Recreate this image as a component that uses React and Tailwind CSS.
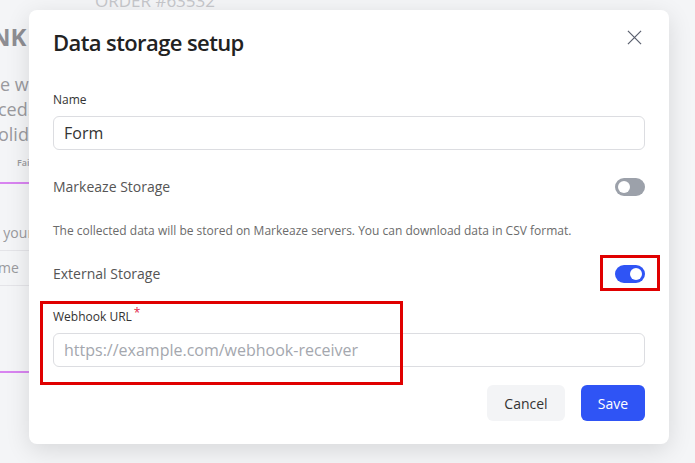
import { useState } from "react";

const font = { fontFamily: '"Open Sans", "Noto Sans", sans-serif' };

const Toggle = ({ on, onChange }) => (
  <button
    onClick={onChange}
    className={`relative flex h-[18px] w-[30px] items-center rounded-full px-[3px] ${
      on ? "justify-end bg-[#2f54f5]" : "justify-start bg-[#9ca1aa]"
    }`}
  >
    <span className="block h-[12px] w-[12px] rounded-full bg-white" />
  </button>
);

const Backdrop = () => (
  <div className="flex h-full w-[29px] flex-col overflow-hidden text-[#9a9a9e]" style={font}>
    <div className="h-[24px]" />
    <div className="-ml-[9px] whitespace-nowrap text-[24px] font-bold leading-[26px] text-[#8e8e93]">NK</div>
    <div className="mt-[22px] whitespace-nowrap text-[18px] leading-[25px]">e wil</div>
    <div className="-ml-[2px] whitespace-nowrap text-[18px] leading-[25px]">ced.</div>
    <div className="-ml-[2px] whitespace-nowrap text-[18px] leading-[25px]">olida</div>
    <div className="mt-[9px] whitespace-nowrap pl-[17px] text-[9px] font-semibold">Fai</div>
    <div className="mt-[12px] h-[2px] w-full bg-[#d884f0]" />
    <div className="-ml-[6px] mt-[39px] whitespace-nowrap text-[14px] leading-[20px]">r your</div>
    <div className="mt-[7px] h-px w-full bg-[#e4e4e8]" />
    <div className="-ml-[2px] mt-[7px] whitespace-nowrap text-[14px] leading-[20px]">me</div>
    <div className="mt-[7px] h-px w-full bg-[#e4e4e8]" />
    <div className="mt-[85px] h-[2px] w-full bg-[#d884f0]" />
  </div>
);

export default function App() {
  const [name, setName] = useState("Form");
  const [markeaze, setMarkeaze] = useState(false);
  const [external, setExternal] = useState(true);
  const [url, setUrl] = useState("");

  return (
    <div className="relative h-[463px] w-[695px] overflow-hidden bg-[#f4f5f7]" style={font}>
      <Backdrop />
      <div className="absolute left-[95px] top-[-12px] whitespace-nowrap text-[17px] text-[#c6c7cb]">
        ORDER #63532
      </div>

      <div className="absolute left-[29px] top-[10px] flex h-[434px] w-[640px] flex-col rounded-[8px] bg-white px-[24px] shadow-[0_6px_24px_rgba(0,0,0,0.12)]">
        <div className="flex items-start justify-between pt-[18px]">
          <h2 className="text-[22px] font-semibold leading-[28px] tracking-[-0.6px] text-[#222]">Data storage setup</h2>
          <button className="mr-[3px] mt-[2px] text-[#5a5f6e]">
            <svg width="15" height="15" viewBox="0 0 16 16" fill="none" stroke="currentColor" strokeWidth="1.3">
              <path d="M1 1l14 14M15 1L1 15" />
            </svg>
          </button>
        </div>

        <label className="mt-[36px] text-[12px] leading-[16px] text-[#333]">Name</label>
        <input
          value={name}
          onChange={(e) => setName(e.target.value)}
          className="mt-[8px] h-[34px] w-full rounded-[6px] border border-[#dcdde1] px-[10px] text-[16px] text-[#333] outline-none"
        />

        <div className="mt-[26px] flex items-center justify-between">
          <span className="text-[14px] text-[#555]">Markeaze Storage</span>
          <Toggle on={markeaze} onChange={() => setMarkeaze(!markeaze)} />
        </div>
        <p className="mt-[26px] text-[12px] leading-[16px] text-[#6b6b6b]">
          The collected data will be stored on Markeaze servers. You can download data in CSV format.
        </p>

        <div className="mt-[24px] flex items-center justify-between">
          <span className="text-[14px] text-[#555]">External Storage</span>
          <div className="relative">
            <Toggle on={external} onChange={() => setExternal(!external)} />
            <div className="pointer-events-none absolute left-[-15px] top-[-10px] h-[36px] w-[60px] border-[3px] border-[#e00000]" />
          </div>
        </div>

        <div className="relative mt-[19px]">
          <div className="pointer-events-none absolute left-[-13px] top-[-2px] h-[84px] w-[363px] border-[3px] border-[#e00000]" />
          <label className="text-[12px] leading-[16px] text-[#333]">
            Webhook URL<span className="relative top-[-4px] ml-[2px] text-[#e11d48]">*</span>
          </label>
          <input
            value={url}
            onChange={(e) => setUrl(e.target.value)}
            placeholder="https://example.com/webhook-receiver"
            className="mt-[6px] block h-[34px] w-full rounded-[6px] border border-[#dcdde1] px-[10px] text-[16px] text-[#333] outline-none placeholder:text-[#a4a7ae]"
          />
        </div>

        <div className="mt-[18px] flex justify-end gap-[16px]">
          <button className="h-[36px] w-[78px] rounded-[6px] bg-[#f3f4f6] text-[14px] font-medium text-[#333]">
            Cancel
          </button>
          <button className="h-[36px] w-[64px] rounded-[6px] bg-[#2f54f5] text-[14px] font-medium text-white">
            Save
          </button>
        </div>
      </div>
    </div>
  );
}
